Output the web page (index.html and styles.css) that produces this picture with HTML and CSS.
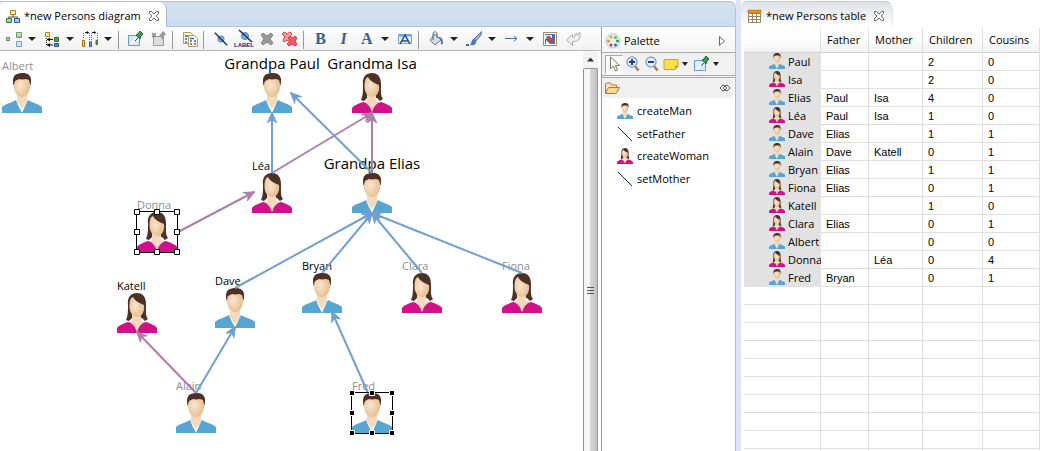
FILE: index.html
```html
<!DOCTYPE html>
<html lang="en">
<head>
<meta charset="utf-8">
<title>Persons</title>
<link rel="stylesheet" href="styles.css">
</head>
<body>
<svg class="defs" aria-hidden="true">
  <defs>
    <radialGradient id="skin" cx="40%" cy="45%" r="65%"><stop offset="0" stop-color="#f9e6d0"/><stop offset="1" stop-color="#e6bb88"/></radialGradient>
    <linearGradient id="leaf" x2="0" y2="1"><stop offset="0" stop-color="#e3f2d0"/><stop offset="1" stop-color="#8fc08c"/></linearGradient>
    <marker id="head-blue" viewBox="0 0 11 12" refX="10" refY="6" markerWidth="11" markerHeight="12" markerUnits="userSpaceOnUse" orient="auto"><path d="M1 2 10 6 1 10 4 6z" fill="#729fcf" stroke="#729fcf" stroke-width="1.500"/></marker>
    <marker id="head-purple" viewBox="0 0 11 12" refX="10" refY="6" markerWidth="11" markerHeight="12" markerUnits="userSpaceOnUse" orient="auto"><path d="M1 2 10 6 1 10 4 6z" fill="#ad7fa8" stroke="#ad7fa8" stroke-width="1.500"/></marker>
  </defs>
  <symbol id="man" viewBox="0 0 40 40">
    <path d="M15 21h10v8l-5 7-5-7z" fill="#f3d9bd"/>
    <path d="M14 28l6 11-3 1h6l-3-1 6-11 2 12H12z" fill="#fff"/>
    <path d="M0 40v-6c3-3 9-4 14-7 1 4 4 8 6 13 2-5 4-9 6-13 5 3 11 4 14 7v6z" fill="#57a5d1"/>
    <path d="M12 9c0-5 3-6 8-6s8 1 8 6c1 8-2 15-8 15S11 17 12 9z" fill="url(#skin)"/>
    <path d="M11.500 13C10 5 12 1 17 .5c3-.8 8-.4 10 1.500 3 3 2 7 1.500 11L27 7l-3-1-4 .5-3-.5-4 2z" fill="#4d3026"/>
  </symbol>
  <symbol id="woman" viewBox="0 0 40 40">
    <path d="M11 12C10 4 14 0 20 0s9 4 9 12c0 6-.5 11 2 14l-3 2-3-3H15l-3 3-3-1c2-4 2-9 2-15z" fill="#4d3026"/>
    <path d="M15 21h9v7l7 2-10 9h-3L9 30l6-2z" fill="#f3d9bd"/>
    <path d="M12.500 14c0-5 .5-9 3.500-10 2 4 6 6 11 8 1 6-2 12-6.500 12-5 0-8-5-8-10z" fill="url(#skin)"/>
    <path d="M0 40v-5c2-3 6-4 11-6 4 1 7 4 8 8l1 2 1-2c1-4 4-7 8-8 5 2 9 3 11 6v5z" fill="#d1108a"/>
  </symbol>
  <symbol id="close" viewBox="0 0 12 12"><path d="M1.500 1.500h2L6 4l2.500-2.500h2v2L8 6l2.500 2.500v2h-2L6 8l-2.500 2.500h-2v-2L4 6 1.500 3.500z" fill="#fff" stroke="#666"/></symbol>
  <symbol id="pin" viewBox="0 0 16 16"><path d="M.5 4.500h11v10H.5z" fill="#d9ecfa" stroke="#6c9cc6"/><path d="M3 13 8 8" stroke="#fff" stroke-width="2"/><path d="M7 10l3-3" stroke="#345"/><path d="m8 4 4 4 1-3 2-2-3-3-2 3z" fill="#3b9a4b" stroke="#1c6631"/></symbol>
  <symbol id="magnifier" viewBox="0 0 16 16"><path d="m9.500 9.500 4 5" stroke="#a87c55" stroke-width="2.500"/><circle cx="7" cy="6" r="5" fill="#e6f0fd" stroke="#8fa6cb" stroke-width="1.500"/></symbol>
  <symbol id="cross" viewBox="0 0 16 16"><path d="m4 2 4 3 4-3 2 2-3 4 3 4-2 2-4-3-4 3-2-2 3-4-3-4z"/></symbol>
  <symbol id="diagonal" viewBox="0 0 18 18"><circle cx="9" cy="9" r="3.500" fill="#86b8d4" stroke="#4e829f"/><path d="M2 2l14 14" stroke="#14237f" stroke-width="1.500"/></symbol>
</svg>

<main class="workbench">
  <section class="editor">
    <header class="tabs">
      <div class="tab">
        <svg class="icon" viewBox="0 0 16 16"><path d="M8 7v2M3.500 11V9h9v2" fill="none" stroke="#555"/><path d="M5.500 2.500h5v4h-5z" fill="#fbe9a8" stroke="#ad7c1c"/><path d="M1.500 10.500h5v4h-5z" fill="#a8d79b" stroke="#34753c"/><path d="M9.500 10.500h5v4h-5z" fill="#a9c9f2" stroke="#2d5a9c"/></svg>
        <h1 class="title">*new Persons diagram</h1>
        <button class="plain" aria-label="Close diagram"><svg class="close"><use href="#close"/></svg></button>
      </div>
    </header>
    <div class="editor-body">
      <div class="diagram">
        <div class="toolbar" role="toolbar" aria-label="Diagram">
          <button class="tool menu" aria-label="Arrange"><svg class="icon" viewBox="0 0 16 16"><path d="M.5 6.500h3v3h-3z" fill="#a8d3a0" stroke="#629263"/><path d="M10.500 1.500h5v5h-5z" fill="url(#leaf)" stroke="#6b9a6b"/><path d="M10.500 10.500h5v5h-5z" fill="#d5e5f8" stroke="#7e9dc6"/></svg></button>
          <button class="tool menu" aria-label="Select"><svg class="icon" viewBox="0 0 16 16"><path d="M1.500 1.500h4v4h-4z" fill="#fff1b0" stroke="#b98116"/><path d="M2.500 7v8" stroke="#111" stroke-dasharray="1 1"/><path d="M3 8.500h6M3 14h6" stroke="#111"/><path d="M3 8.500l3-2v4zM3 14l3-2v4z"/><path d="M10.500 6.500h4v4h-4z" fill="#50a262" stroke="#296c39"/><path d="M10.500 12.500h4v3h-4z" fill="#5a89c9" stroke="#264f8b"/></svg></button>
          <button class="tool menu" aria-label="Align"><svg class="icon" viewBox="0 0 16 16"><path d="M1.500 2v6M7.500 2v9M9.500 2v9M15.500 2v7" stroke="#ef3434" stroke-dasharray="1 1"/><path d="M3 1.500h4M10 1.500h4" stroke="#222"/><path d="M4 1.500l2-1.500v3zM11 1.500l2-1.500v3z"/><path d="M.5 9.500h2v6h-2z" fill="#f8d487" stroke="#a96e0a"/><path d="M7.500 11.500h2v4h-2z" fill="#6f9adc" stroke="#315b9d"/><path d="M14 9.500h1.500v4H14z" fill="#67a777" stroke="#32743e"/></svg></button>
          <span class="rule"></span>
          <button class="tool" aria-label="Pin"><svg class="icon"><use href="#pin"/></svg></button>
          <button class="tool" aria-label="Unpin"><svg class="icon" viewBox="0 0 16 16"><path d="M2.500 5.500h10v9h-10z" fill="#ddd" stroke="#999"/><path d="M1 2l4 4M5 2 1 6" stroke="#888" stroke-width="1.500"/><path d="m8 4 4 5 1-4 2-2-3-3-2 3z" fill="#999"/></svg></button>
          <span class="rule"></span>
          <button class="tool" aria-label="Copy layout"><svg class="icon" viewBox="0 0 16 16"><path d="M1.500 1.500h7l2 2v9h-9z" fill="#fff5d6" stroke="#b39b58"/><path d="M6.500 4.500h6l3 3v8h-9z" fill="#fffaf0" stroke="#b39b58"/><path d="M3 5h3M3 8h2M3 11h2M8 7.500h4M8 10h2m2 0h2M8 13h2m2 0h2" stroke="#3c68a8" stroke-width="1.500"/></svg></button>
          <span class="rule"></span>
          <button class="tool" aria-label="Hide"><svg class="icon"><use href="#diagonal"/></svg></button>
          <button class="tool" aria-label="Hide label"><svg class="label-icon" viewBox="0 0 20 20"><circle cx="11" cy="7" r="3.500" fill="#86b8d4" stroke="#4e829f"/><path d="m5 1 13 12" stroke="#14237f" stroke-width="1.500"/><text class="micro" x="0" y="18">LABEL</text></svg></button>
          <button class="tool" aria-label="Delete"><svg class="icon" fill="#999" stroke="#858585"><use href="#cross"/></svg></button>
          <button class="tool" aria-label="Delete from model"><svg class="icon" viewBox="0 0 16 16"><g fill="#f8a0a0" stroke="#d83b45"><path d="m2 1 3 2 3-2 2 2-2 3 3 3-2 2-4-2-3 2-1-2 2-3-3-3z"/><path d="m8 5 2 2 3-2 2 2-2 3 2 3-2 2-3-2-3 2-2-2 3-3-2-3z" fill="#f05c61"/></g></svg></button>
          <span class="rule"></span>
          <button class="tool letter">B</button>
          <button class="tool letter slanted">I</button>
          <button class="tool menu letter thin">A</button>
          <button class="tool" aria-label="Font"><svg class="icon" viewBox="0 0 16 16"><path d="M1.500 3.500h13v9h-13z" fill="#e5f1fc" stroke="#75a6d6"/><path d="M2 4.500h12" stroke="#75a6d6" stroke-width="2"/><path d="m3 13 5-9 5 9M5 10h6" fill="none" stroke="#254d80" stroke-width="1.500"/></svg></button>
          <span class="rule"></span>
          <button class="tool menu" aria-label="Fill colour"><svg class="icon" viewBox="0 0 16 16"><path d="m7 3 6 6-6 5-5-5z" fill="#d5dbe2" stroke="#6d7782"/><path d="M5 9V3c0-3 4-3 4 0v4" fill="none" stroke="#59636d"/><path d="M10 6c3 0 5 1 5 6-1 3-3 1-2-1 0-2-1-3-3-5z" fill="#4677b5"/></svg></button>
          <button class="tool menu" aria-label="Line colour"><svg class="icon" viewBox="0 0 16 16"><path d="M15.500.5 8 8l2 2 5-6z" fill="#93b0cf" stroke="#57789c"/><path d="M8 8c-3 0-2 4-4 6 4 1 7-1 6-4z" fill="#4b7cb8"/><path d="M0 13h3v2H0z" fill="#356bb0"/></svg></button>
          <button class="tool menu" aria-label="Line style"><svg class="icon" viewBox="0 0 16 16"><path d="M1 7.500h12M10 5l3 2.500-3 2.500" fill="none" stroke="#4467a5"/></svg></button>
          <button class="tool" aria-label="Image"><svg class="icon" viewBox="0 0 16 16"><path d="M1.500 1.500h13v13h-13z" fill="#fff" stroke="#a58b65"/><path d="M3 3h10v10H3z" fill="#3973b4"/><path d="M3 4h7v3L3 8z" fill="#dfeaf4"/><path d="m5 5 3 0 5 8h-3L7 8l-3 1z" fill="#d94032"/><path d="M4 9l4 4H4z" fill="#fff"/></svg></button>
          <button class="tool" aria-label="Reset style"><svg class="icon" viewBox="0 0 16 16"><path d="m1.500 9 6-5.500v3c3 0 3-1 2-3l2-1 1 2 2-3c2 6-1 9-7 9v4z" fill="#f0f0f0" stroke="#aaa"/></svg></button>
        </div>
        <div class="viewport">
          <div class="canvas">
            <div class="node albert muted"><span>Albert</span><svg><use href="#man"/></svg></div>
            <div class="node paul elder"><span>Grandpa Paul</span><svg><use href="#man"/></svg></div>
            <div class="node isa elder"><span>Grandma Isa</span><svg><use href="#woman"/></svg></div>
            <div class="node lea"><span>Léa</span><svg><use href="#woman"/></svg></div>
            <div class="node elias elder"><span>Grandpa Elias</span><svg><use href="#man"/></svg></div>
            <div class="node donna muted"><span>Donna</span><svg><use href="#woman"/></svg></div>
            <div class="node bryan"><span>Bryan</span><svg><use href="#man"/></svg></div>
            <div class="node clara muted"><span>Clara</span><svg><use href="#woman"/></svg></div>
            <div class="node fiona muted"><span>Fiona</span><svg><use href="#woman"/></svg></div>
            <div class="node dave"><span>Dave</span><svg><use href="#man"/></svg></div>
            <div class="node katell"><span>Katell</span><svg><use href="#woman"/></svg></div>
            <div class="node alain muted"><span>Alain</span><svg><use href="#man"/></svg></div>
            <div class="node fred muted"><span>Fred</span><svg><use href="#man"/></svg></div>
            <svg class="links">
              <g class="mother">
                <path d="M272 122 372 62"/><path d="M372 122V62"/><path d="M178 181l76-40"/><path d="M196 342l-59-61"/>
              </g>
              <g class="father">
                <path d="M272 122V62"/><path d="M372 122 291 42"/><path d="M235 237 372 162"/><path d="M322 222l50-60"/><path d="M422 222l-50-60"/><path d="M522 222 372 162"/><path d="M196 342l39-66"/><path d="M368 342 332 261"/>
              </g>
              <g fill="none" stroke="#000"><path d="M136.500 160.500h41v41h-41zM351.500 341.500h41v41h-41z"/></g>
              <g fill="#fff" stroke="#000">
                <path d="M134.500 158.500h5v5h-5zM154.500 158.500h5v5h-5zM174.500 158.500h5v5h-5zM134.500 178.500h5v5h-5zM174.500 178.500h5v5h-5zM134.500 198.500h5v5h-5zM154.500 198.500h5v5h-5zM174.500 198.500h5v5h-5z"/>
              </g>
              <g fill="#000" stroke="#fff">
                <path d="M349.500 339.500h5v5h-5zM369.500 339.500h5v5h-5zM389.500 339.500h5v5h-5zM349.500 359.500h5v5h-5zM389.500 359.500h5v5h-5zM349.500 379.500h5v5h-5zM369.500 379.500h5v5h-5zM389.500 379.500h5v5h-5z"/>
              </g>
            </svg>
          </div>
          <div class="scrollbar">
            <svg class="arrow-up" viewBox="0 0 14 17"><path d="M4 10.500 7.500 6.500l3.500 4z" fill="#333"/></svg>
            <div class="thumb"><svg viewBox="0 0 8 10"><path d="M0 1.500h7M0 4.500h7M0 7.500h7" stroke="#555"/></svg></div>
          </div>
        </div>
      </div>
      <aside class="palette">
        <div class="palette-title">
          <svg class="icon" viewBox="0 0 16 16"><circle cx="8" cy="8" r="7" fill="#e8f0fa" stroke="#b0c2df"/><circle cx="6" cy="4" r="1.500" fill="#f0a11e"/><circle cx="10.500" cy="4.500" r="1.500" fill="#6cb52a"/><circle cx="3.500" cy="8" r="1.500" fill="#f08b1e"/><circle cx="12.500" cy="8" r="1.500" fill="#2d9e34"/><circle cx="6" cy="12" r="1.500" fill="#c9303b"/><circle cx="10.500" cy="12" r="1.500" fill="#3163c0"/></svg>
          <h2 class="title">Palette</h2>
          <button class="plain" aria-label="Collapse palette"><svg class="close" viewBox="0 0 12 12"><path d="m3.500 1.500 5 4.500-5 4.500z" fill="#fff" stroke="#666"/></svg></button>
        </div>
        <div class="palette-tools">
          <button class="pressed" aria-label="Select tool"><svg class="icon" viewBox="0 0 16 16"><path d="M4.500 1v12l3-3 2 5 2-1-2-4.500h4z" fill="#fffbe8" stroke="#777"/></svg></button>
          <button aria-label="Zoom in"><svg class="icon"><use href="#magnifier"/><path d="M4 6h6M7 3v6" stroke="#1c3c96" stroke-width="2"/></svg></button>
          <button aria-label="Zoom out"><svg class="icon"><use href="#magnifier"/><path d="M4 6h6" stroke="#1c3c96" stroke-width="2"/></svg></button>
          <button class="menu" aria-label="Note"><svg class="icon" viewBox="0 0 16 16"><path d="M1 3.500h14v7l-3 3H1z" fill="#fbdf4b" stroke="#cfa51e"/><path d="M15 10h-3v3z" fill="#b88f18"/></svg></button>
          <button class="menu" aria-label="Pin tool"><svg class="icon"><use href="#pin"/></svg></button>
        </div>
        <div class="drawer">
          <svg class="icon" viewBox="0 0 16 16"><path d="M1.500 13V4l1-1h4l1 2h5v3" fill="#fce8b5" stroke="#ba7522"/><path d="m1.500 13.500 3-6h11l-3.500 6z" fill="#fbd894" stroke="#ba7522"/></svg>
          <svg class="icon" viewBox="0 0 16 16"><path d="M6 5 3 8l3 3 2-1-2-2 2-2zM10 5l3 3-3 3-2-1 2-2-2-2z" fill="#fff" stroke="#555"/></svg>
        </div>
        <ul class="creators">
          <li><button><svg class="icon"><use href="#man"/></svg>createMan</button></li>
          <li><button><svg class="icon" viewBox="0 0 16 16"><path d="m1 1 14 14" stroke="#14237f"/></svg>setFather</button></li>
          <li><button><svg class="icon"><use href="#woman"/></svg>createWoman</button></li>
          <li><button><svg class="icon" viewBox="0 0 16 16"><path d="m1 1 14 14" stroke="#14237f"/></svg>setMother</button></li>
        </ul>
      </aside>
    </div>
  </section>

  <section class="sheet">
    <header class="sheet-tabs">
      <div class="sheet-tab">
        <svg class="icon" viewBox="0 0 16 16"><path d="M2 3h12v11H2z" fill="#fff"/><path d="M1.500 5.500h12v9h-12zM1.500 8.500h12M1.500 11.500h12M5.500 5v9M9.500 5v9" fill="none" stroke="#918a69"/><path d="M1 2h13v3H1z" fill="#e6952d" stroke="#a65e10" stroke-width=".5"/></svg>
        <h1 class="title">*new Persons table</h1>
        <button class="plain" aria-label="Close table"><svg class="close"><use href="#close"/></svg></button>
      </div>
    </header>
    <table>
      <colgroup><col class="c-name"><col class="c-father"><col class="c-mother"><col class="c-children"><col class="c-cousins"></colgroup>
      <thead><tr><th scope="col" aria-label="Person"></th><th scope="col">Father</th><th scope="col">Mother</th><th scope="col">Children</th><th scope="col">Cousins</th></tr></thead>
      <tbody>
        <tr><th scope="row"><svg class="icon"><use href="#man"/></svg>Paul</th><td></td><td></td><td>2</td><td>0</td></tr>
        <tr><th scope="row"><svg class="icon"><use href="#woman"/></svg>Isa</th><td></td><td></td><td>2</td><td>0</td></tr>
        <tr><th scope="row"><svg class="icon"><use href="#man"/></svg>Elias</th><td>Paul</td><td>Isa</td><td>4</td><td>0</td></tr>
        <tr><th scope="row"><svg class="icon"><use href="#woman"/></svg>Léa</th><td>Paul</td><td>Isa</td><td>1</td><td>0</td></tr>
        <tr><th scope="row"><svg class="icon"><use href="#man"/></svg>Dave</th><td>Elias</td><td></td><td>1</td><td>1</td></tr>
        <tr><th scope="row"><svg class="icon"><use href="#man"/></svg>Alain</th><td>Dave</td><td>Katell</td><td>0</td><td>1</td></tr>
        <tr><th scope="row"><svg class="icon"><use href="#man"/></svg>Bryan</th><td>Elias</td><td></td><td>1</td><td>1</td></tr>
        <tr><th scope="row"><svg class="icon"><use href="#woman"/></svg>Fiona</th><td>Elias</td><td></td><td>0</td><td>1</td></tr>
        <tr><th scope="row"><svg class="icon"><use href="#woman"/></svg>Katell</th><td></td><td></td><td>1</td><td>0</td></tr>
        <tr><th scope="row"><svg class="icon"><use href="#woman"/></svg>Clara</th><td>Elias</td><td></td><td>0</td><td>1</td></tr>
        <tr><th scope="row"><svg class="icon"><use href="#man"/></svg>Albert</th><td></td><td></td><td>0</td><td>0</td></tr>
        <tr><th scope="row"><svg class="icon"><use href="#woman"/></svg>Donna</th><td></td><td>Léa</td><td>0</td><td>4</td></tr>
        <tr><th scope="row"><svg class="icon"><use href="#man"/></svg>Fred</th><td>Bryan</td><td></td><td>0</td><td>1</td></tr>
      </tbody>
      <tbody>
        <tr><td></td><td></td><td></td><td></td><td></td></tr>
        <tr><td></td><td></td><td></td><td></td><td></td></tr>
        <tr><td></td><td></td><td></td><td></td><td></td></tr>
        <tr><td></td><td></td><td></td><td></td><td></td></tr>
        <tr><td></td><td></td><td></td><td></td><td></td></tr>
        <tr><td></td><td></td><td></td><td></td><td></td></tr>
        <tr><td></td><td></td><td></td><td></td><td></td></tr>
        <tr><td></td><td></td><td></td><td></td><td></td></tr>
        <tr><td></td><td></td><td></td><td></td><td></td></tr>
        <tr><td></td><td></td><td></td><td></td><td></td></tr>
      </tbody>
    </table>
  </section>
</main>
</body>
</html>
```

FILE: styles.css
```css
* { box-sizing: border-box; }
body { margin: 0; overflow: hidden; background: #fff; color: #000; font: 11px/16px "Open Sans", "Noto Sans", sans-serif; }
button { display: flex; align-items: center; margin: 0; padding: 0; border: 0; background: none; color: inherit; font: inherit; }
svg { display: block; flex: none; }
.defs { position: absolute; width: 0; height: 0; }
.icon { width: 16px; height: 16px; }
.close { width: 12px; height: 12px; }
.title { margin: 0; font-size: 11px; font-weight: 400; white-space: nowrap; }

.workbench { display: flex; height: 100vh; }
.editor { flex: 1; min-width: 0; display: flex; flex-direction: column; padding-top: 1px; }
.tabs { display: flex; height: 26px; border: 1px solid #b4c2d8; border-left: 0; border-radius: 0 7px 0 0; background: linear-gradient(#d3e1f0, #cddded); }
.tab { display: flex; align-items: center; gap: 7px; height: 25px; padding: 2px 6px 0 5px; border-right: 1px solid #a9b8d0; border-radius: 4px 8px 0 0; background: #fff; }
.tab .icon { margin-right: -4px; }
.editor-body { flex: 1; min-height: 0; display: flex; border-right: 1px solid #b4b8cf; }

.diagram { flex: 1; min-width: 0; display: flex; flex-direction: column; }
.toolbar { display: flex; height: 24px; padding: 1px 0 0 2px; border-bottom: 1px solid #b8b8b8; background: linear-gradient(#fdfdfd, #f2f2f2); }
.tool { width: 23px; justify-content: center; }
.menu::after { content: ""; border: 4px solid transparent; border-top-color: #222; border-bottom: 0; }
.tool.menu { width: 38px; justify-content: flex-start; padding-left: 4px; gap: 6px; }
.rule { width: 8px; margin: 3px 0 1px; background: linear-gradient(#999, #999) 2px 0 / 1px 100% no-repeat; }
.letter { color: #34608f; font: 700 16px/20px "Liberation Serif", serif; }
.slanted { font-style: italic; }
.tool.thin { gap: 8px; padding-left: 6px; }
.label-icon { width: 20px; height: 20px; }
.micro { fill: #14237f; font: 700 6px "Liberation Sans", sans-serif; }
.viewport { flex: 1; min-height: 0; display: flex; }
.canvas { position: relative; flex: 1; overflow: hidden; }
.scrollbar { display: flex; flex-direction: column; width: 15px; margin-right: 3px; background: #f3f3f3; }
.arrow-up { width: 14px; height: 17px; }
.thumb { flex: 1; display: grid; place-items: center; border: 1px solid #949494; border-bottom: 0; border-radius: 2px 2px 0 0; background: linear-gradient(90deg, #f5f5f5 45%, #d6d7d9 50%, #c0c1c5); }
.thumb svg { width: 8px; height: 10px; margin-top: 62px; }

.node { position: absolute; display: flex; flex-direction: column; align-items: flex-start; width: 40px; line-height: 14px; white-space: nowrap; }
.node svg { width: 40px; height: 40px; }
.muted { color: #8e8e8e; }
.elder { align-items: center; font-size: 15px; line-height: 20px; }
.albert { left: 2px; top: 8px; }
.paul { left: 252px; top: 2px; }
.isa { left: 352px; top: 2px; }
.lea { left: 252px; top: 108px; }
.elias { left: 352px; top: 102px; }
.donna { left: 137px; top: 147px; }
.bryan { left: 302px; top: 208px; }
.clara { left: 402px; top: 208px; }
.fiona { left: 502px; top: 208px; }
.dave { left: 215px; top: 223px; }
.katell { left: 117px; top: 228px; }
.alain { left: 176px; top: 328px; }
.fred { left: 352px; top: 328px; }
.links { position: absolute; inset: 0; width: 100%; height: 100%; pointer-events: none; }
.father, .mother { fill: none; stroke-width: 2; }
.father { stroke: #729fcf; }
.mother { stroke: #ad7fa8; }
.father path { marker-end: url(#head-blue); }
.mother path { marker-end: url(#head-purple); }

.palette { width: 134px; border-left: 1px solid #999; }
.palette-title { display: flex; align-items: center; gap: 3px; height: 26px; padding: 2px 7px 0 3px; border-bottom: 1px solid #aaa; background: linear-gradient(#fff, #f4f4f4); }
.palette-title .title { flex: 1; }
.palette-tools { display: flex; align-items: center; height: 25px; padding: 0 3px; border-bottom: 3px double #aaa; background: #f1f1f1; }
.palette-tools button { height: 19px; padding: 0 1px 0 2px; }
.palette-tools .menu { gap: 3px; padding-right: 4px; }
.palette-tools .menu::after { border-width: 4px 3px 0; }
.palette-tools .pressed { border: 1px solid #aaa; border-right-color: #fff; border-bottom-color: #fff; padding: 0; background: #f8f8f8; }
.drawer { display: flex; justify-content: space-between; align-items: center; height: 20px; margin-right: 2px; padding: 0 0 0 2px; background: #f0f0f0; }
.creators { display: grid; grid-auto-rows: 23px 22px; margin: 0; padding: 2px 0 0 15px; list-style: none; }
.creators button { gap: 4px; height: 22px; }

.sheet { width: 304px; padding: 1px 0 0 3px; border-left: 5px solid #dfe4f5; }
.sheet-tabs { display: flex; height: 27px; margin-left: -3px; }
.sheet-tab { display: flex; align-items: center; gap: 7px; height: 25px; padding: 3px 7px 0 6px; border-top: 1px solid #c5c9d0; border-right: 1px solid #e4e6ea; border-radius: 6px 8px 0 0; background: linear-gradient(#dee1e7, #fff); }
.sheet-tab .icon { margin-right: -4px; }
table { width: 100%; table-layout: fixed; border-collapse: separate; border-spacing: 0; }
.c-name { width: 77px; }
.c-father { width: 48px; }
.c-mother { width: 54px; }
.c-children { width: 60px; }
th { overflow: hidden; padding: 0; font-weight: 400; text-align: left; white-space: nowrap; }
thead th { height: 25px; padding-left: 6px; border-right: 1px solid #dedfe1; border-bottom: 1px solid #d2d2d2; background: linear-gradient(#fff 40%, #f0f2f4); }
tbody th { height: 18px; padding-left: 25px; background: #e2e2e2; line-height: 18px; }
tbody th .icon { display: inline-block; margin-right: 3px; vertical-align: top; }
td { height: 18px; padding: 0 0 0 5px; border-right: 1px solid #dfdfdf; border-bottom: 1px solid #dfdfdf; font: 11px/16px "Liberation Sans", Arial, sans-serif; }
```
